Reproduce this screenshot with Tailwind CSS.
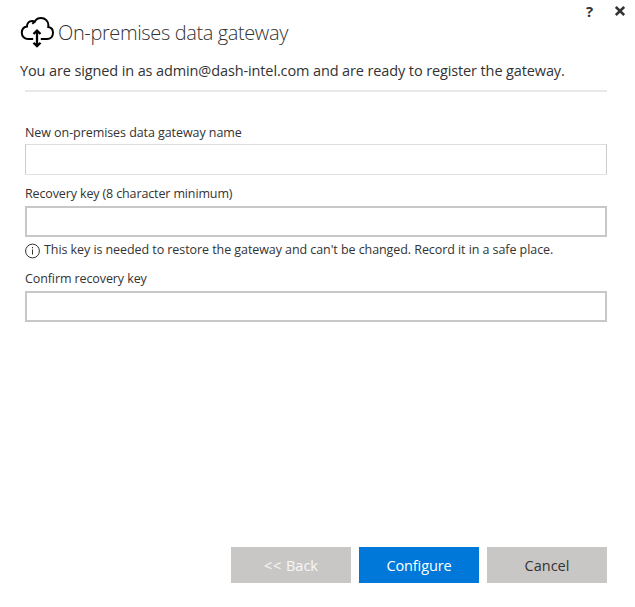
<!DOCTYPE html>
<html lang="en">
<head>
<meta charset="utf-8">
<title>On-premises data gateway</title>
<script src="https://cdn.jsdelivr.net/npm/@tailwindcss/browser@4"></script>
</head>
<body class="bg-white">
<main class="relative flex h-[607px] w-[635px] flex-col overflow-hidden bg-white font-['Open_Sans','Noto_Sans',sans-serif] text-[#333] whitespace-nowrap">
  <div class="absolute top-0 right-[10px] flex h-[22px] items-center gap-[20px]">
    <button class="w-[11px] text-[15px] leading-[22px] font-bold" aria-label="Help">?</button>
    <button class="w-[10px]" aria-label="Close">
      <svg class="block h-[10px] w-[10px]" viewBox="0 0 10 10" fill="none" stroke="#333" stroke-width="2.5"><path d="M.8 1 9.2 9M9.2 1 .8 9"/></svg>
    </button>
  </div>
  <header class="flex h-[60px] pt-[16px] pl-[20px]">
    <svg class="h-[33px] w-[35px] shrink-0" viewBox="0 0 35 33" fill="none" stroke="#000" stroke-width="2">
      <path d="M13.2 23H8.2C4.5 23 1.8 20.3 1.8 16.8c0-3.2 2.2-5.7 5.2-6.2C7 7.200 9.200 5 12 5c1 0 2 .3 2.700.8C15.900 3.300 18.400 2 21 2c4.300 0 7.400 3.200 7.400 7.300 0 .6-.1 1.200-.2 1.700 2.800.4 4.800 2.800 4.800 5.800 0 3.500-2.500 6.200-6 6.200h-6.200M12.200 7.800 14.700 5.800"/>
      <path d="M17 15.200v14.600M13.500 18 17 14.600 20.500 18M13.500 26.700 17 30.100 20.500 26.700" stroke-width="2.300"/>
    </svg>
    <h1 class="ml-[3px] text-[20px] leading-[34px] font-light tracking-[-0.38px]">On-premises data gateway</h1>
  </header>
  <p class="h-[30px] pl-[20px] text-[14.5px] leading-[22px] tracking-[-0.12px]">You are signed in as admin@dash-intel.com and are ready to register the gateway.</p>
  <div class="mx-[25px] h-[2px] w-[582px] bg-[#e8e8e8]"></div>
  <form class="mt-[32px] flex w-[607px] flex-col pl-[25px] text-[12.5px] leading-[18px] tracking-[-0.07px]">
    <label class="h-[20px]" for="name">New on-premises data gateway name</label>
    <input id="name" class="h-[31px] border border-[#ccc] border-t-[#ddd] border-b-[#e2e2e2] bg-white outline-none">
    <label class="mt-[10px] h-[21px] tracking-[-0.13px]" for="key">Recovery key (8 character minimum)</label>
    <input id="key" class="h-[31px] border-2 border-[#c8c8c8] bg-white outline-none">
    <div class="mt-[4px] flex h-[18px]">
      <svg class="mt-[2px] h-[16px] w-[16px] shrink-0" viewBox="0 0 16 16" fill="none" stroke="#333"><circle cx="7.500" cy="8" r="6.900"/><path d="M7.500 6.500v5M7.500 4v1.300"/></svg>
      <span class="ml-[3px]">This key is needed to restore the gateway and can't be changed. Record it in a safe place.</span>
    </div>
    <label class="mt-[11px] h-[21px] tracking-[-0.1px]" for="confirm">Confirm recovery key</label>
    <input id="confirm" class="h-[31px] border-2 border-[#c8c8c8] bg-white outline-none">
  </form>
  <footer class="mt-auto mb-[24px] flex w-[607px] justify-end gap-[8px] text-[14.5px] leading-[36px]">
    <button class="h-[36px] w-[120px] bg-[#c8c7c6] pt-px text-white/85"><span class="tracking-[0.8px]">&lt;&lt;</span> Back</button>
    <button class="h-[36px] w-[120px] bg-[#0078d9] pt-px tracking-[-0.1px] text-white">Configure</button>
    <button class="h-[36px] w-[120px] bg-[#c8c7c6] pt-px">Cancel</button>
  </footer>
</main>
</body>
</html>
